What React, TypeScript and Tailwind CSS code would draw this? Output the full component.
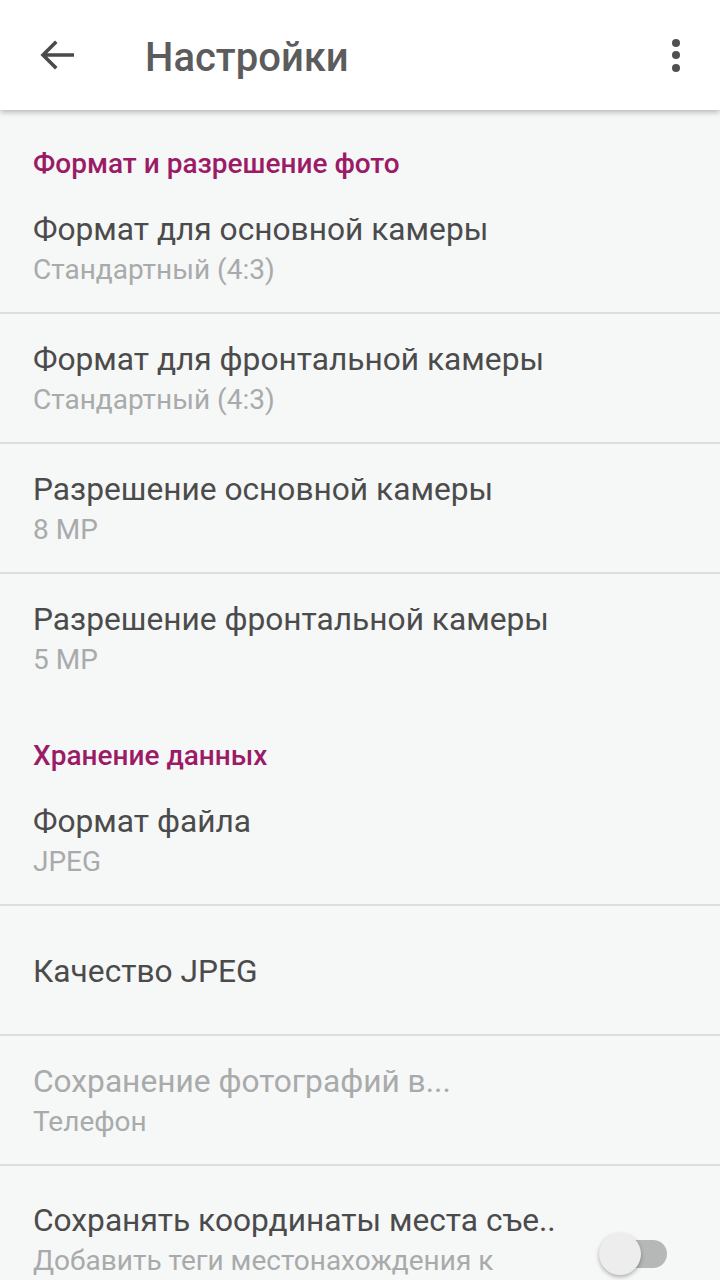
import React from "react";

type Item = {
  title: string;
  summary?: string;
  disabled?: boolean;
  divider?: boolean;
};

const photoItems: Item[] = [
  { title: "Формат для основной камеры", summary: "Стандартный (4:3)", divider: true },
  { title: "Формат для фронтальной камеры", summary: "Стандартный (4:3)", divider: true },
  { title: "Разрешение основной камеры", summary: "8 MP", divider: true },
  { title: "Разрешение фронтальной камеры", summary: "5 MP" },
];

const storageItems: Item[] = [
  { title: "Формат файла", summary: "JPEG", divider: true },
  { title: "Качество JPEG", divider: true },
  {
    title: "Сохранение фотографий в...",
    summary: "Телефон",
    disabled: true,
    divider: true,
  },
];

const SectionHeader = ({ label }: { label: string }) => (
  <div className="h-[74px] pl-[33px] pt-[34px]">
    <p className="text-[28px] leading-[40px] font-medium text-[#9b1b66]">{label}</p>
  </div>
);

const Row = ({ item }: { item: Item }) => (
  <div>
    <div className="h-[128px] px-[33px] pt-[4px] flex flex-col justify-center">
      <p
        className={`text-[31.7px] leading-[40px] whitespace-nowrap ${
          item.disabled ? "text-[#a9aaab]" : "text-[#4b4b4b]"
        }`}
      >
        {item.title}
      </p>
      {item.summary && (
        <p className="text-[28px] leading-[40px] text-[#a9aaab] whitespace-nowrap">
          {item.summary}
        </p>
      )}
    </div>
    {item.divider && <div className="h-[2px] bg-[#dcdddd]" />}
  </div>
);

const App = () => {
  return (
    <div className="h-[1280px] overflow-hidden bg-[#f6f7f7] font-['Roboto',sans-serif]">
      <header className="relative z-10 h-[110px] bg-white flex items-center shadow-[0_2px_6px_rgba(0,0,0,0.28)]">
        <div className="w-[145px] pl-[38px] flex items-center">
          <svg width="36" height="36" viewBox="0 0 36 36" fill="none">
            <path
              d="M35 18H6M17 6L5 18l12 12"
              stroke="#4a4a4a"
              strokeWidth="3.6"
              strokeLinecap="square"
            />
          </svg>
        </div>
        <h1 className="flex-1 text-[40px] leading-[48px] font-medium text-[#5c5c5c] pt-[6px]">
          Настройки
        </h1>
        <div className="w-[88px] flex justify-center">
          <div className="flex flex-col gap-[4.5px] items-center">
            <span className="w-[8px] h-[8px] rounded-full bg-[#505050]" />
            <span className="w-[8px] h-[8px] rounded-full bg-[#505050]" />
            <span className="w-[8px] h-[8px] rounded-full bg-[#505050]" />
          </div>
        </div>
      </header>

      <main>
        <SectionHeader label="Формат и разрешение фото" />
        {photoItems.map((item) => (
          <Row key={item.title} item={item} />
        ))}

        <SectionHeader label="Хранение данных" />
        {storageItems.map((item) => (
          <Row key={item.title} item={item} />
        ))}

        <div className="flex items-center pl-[33px] pr-[53px] pt-[35px]">
          <div className="flex-1">
            <p className="text-[31.7px] leading-[40px] text-[#4b4b4b] whitespace-nowrap">
              Сохранять координаты места съе..
            </p>
            <p className="text-[28px] leading-[40px] text-[#a9aaab] whitespace-nowrap">
              Добавить теги местонахождения к
            </p>
            <p className="text-[28px] leading-[40px] text-[#a9aaab] whitespace-nowrap">
              фотографиям
            </p>
          </div>
          <div className="relative w-[68px] h-[42px] -mt-[14px]">
            <div className="absolute right-0 top-[7px] w-[60px] h-[28px] rounded-full bg-[#b6b8b7]" />
            <div className="absolute left-0 top-0 w-[42px] h-[42px] rounded-full bg-[#ededed] shadow-[0_2px_4px_rgba(0,0,0,0.3)]" />
          </div>
        </div>
      </main>
    </div>
  );
};

export default App;
